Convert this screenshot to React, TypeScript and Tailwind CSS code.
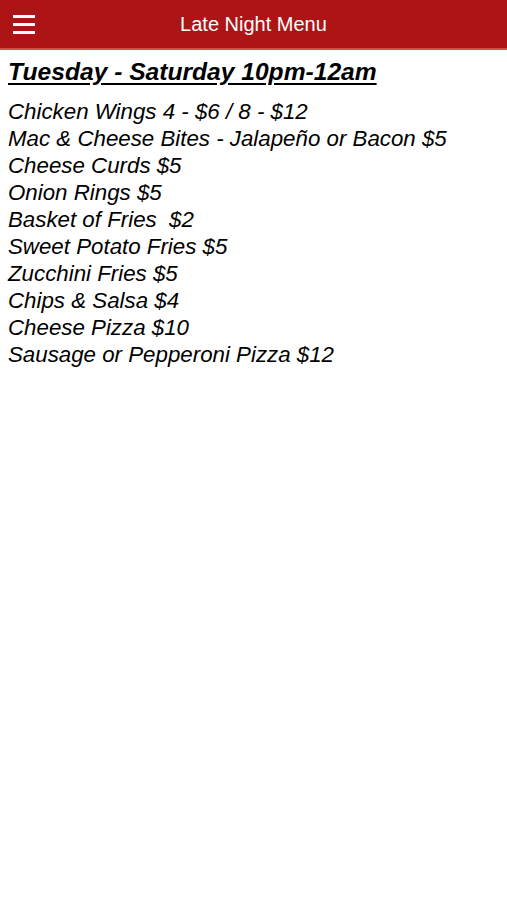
import React from 'react';

const items = [
    'Chicken Wings 4 - $6 / 8 - $12',
    'Mac & Cheese Bites - Jalapeño or Bacon $5',
    'Cheese Curds $5',
    'Onion Rings $5',
    'Basket of Fries \u00a0$2',
    'Sweet Potato Fries $5',
    'Zucchini Fries $5',
    'Chips & Salsa $4',
    'Cheese Pizza $10',
    'Sausage or Pepperoni Pizza $12',
];

const App: React.FC = () => {
    return (
        <div className="min-h-screen bg-white font-['Liberation_Sans',Arial,sans-serif] text-black">
            <header className="relative h-[50px] bg-[#ad1416] border-b-2 border-[#e0494b] flex items-center justify-center">
                <div className="absolute left-[13px] top-[15px] flex flex-col gap-[5px]">
                    <div className="w-[22px] h-[3px] bg-white" />
                    <div className="w-[22px] h-[3px] bg-white" />
                    <div className="w-[22px] h-[3px] bg-white" />
                </div>
                <h1 className="text-white text-[20px]">Late Night Menu</h1>
            </header>
            <div className="px-2 pt-[8px]">
                <h2 className="text-[24.6px] font-bold italic underline underline-offset-[3px] leading-[28px]">
                    Tuesday - Saturday 10pm-12am
                </h2>
                <ul className="mt-[12px] text-[22.3px] italic leading-[27px]">
                    {items.map((item) => (
                        <li key={item}>{item}</li>
                    ))}
                </ul>
            </div>
        </div>
    );
};

export default App;
